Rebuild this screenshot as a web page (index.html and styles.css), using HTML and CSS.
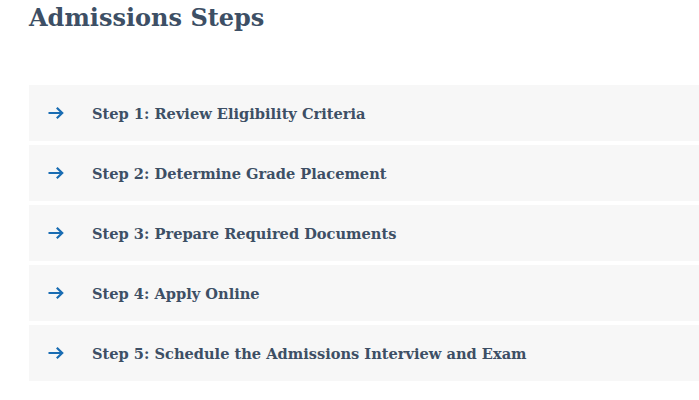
FILE: index.html
```html
<!DOCTYPE html>
<html lang="en">
<head>
<meta charset="utf-8">
<title>Admissions Steps</title>
<link rel="stylesheet" href="styles.css">
</head>
<body>
<section class="steps">
  <h2 class="steps-title">Admissions Steps</h2>
  <ul class="step-list">
    <li class="step"><svg class="step-arrow" viewBox="0 0 16 12" aria-hidden="true"><path d="M0.5 6H14.2M8.8 0.8L14.2 6L8.8 11.2" /></svg><span class="step-label">Step 1: Review Eligibility Criteria</span></li>
    <li class="step"><svg class="step-arrow" viewBox="0 0 16 12" aria-hidden="true"><path d="M0.5 6H14.2M8.8 0.8L14.2 6L8.8 11.2" /></svg><span class="step-label">Step 2: Determine Grade Placement</span></li>
    <li class="step"><svg class="step-arrow" viewBox="0 0 16 12" aria-hidden="true"><path d="M0.5 6H14.2M8.8 0.8L14.2 6L8.8 11.2" /></svg><span class="step-label">Step 3: Prepare Required Documents</span></li>
    <li class="step"><svg class="step-arrow" viewBox="0 0 16 12" aria-hidden="true"><path d="M0.5 6H14.2M8.8 0.8L14.2 6L8.8 11.2" /></svg><span class="step-label">Step 4: Apply Online</span></li>
    <li class="step"><svg class="step-arrow" viewBox="0 0 16 12" aria-hidden="true"><path d="M0.5 6H14.2M8.8 0.8L14.2 6L8.8 11.2" /></svg><span class="step-label">Step 5: Schedule the Admissions Interview and Exam</span></li>
  </ul>
</section>
</body>
</html>
```
FILE: styles.css
```css
html, body {
  margin: 0;
  padding: 0;
  background: #ffffff;
}
.steps {
  padding: 0 0 0 29px;
  font-family: "DejaVu Serif", Georgia, serif;
  color: #3d4f65;
}
.steps-title {
  margin: 0;
  padding-top: 2px;
  font-size: 24px;
  line-height: 32px;
  font-weight: bold;
  height: 83px;
}
.step-list {
  list-style: none;
  margin: 0;
  padding: 0;
  display: flex;
  flex-direction: column;
  gap: 4px;
}
.step {
  height: 56px;
  background: #f7f7f7;
  display: flex;
  align-items: center;
  padding-left: 19px;
}
.step-arrow {
  width: 16px;
  height: 12px;
  flex: none;
  fill: none;
  stroke: #1a6db3;
  stroke-width: 2.2;
  margin-right: 28px;
}
.step-label {
  font-size: 14.6px;
  font-weight: bold;
}
```
